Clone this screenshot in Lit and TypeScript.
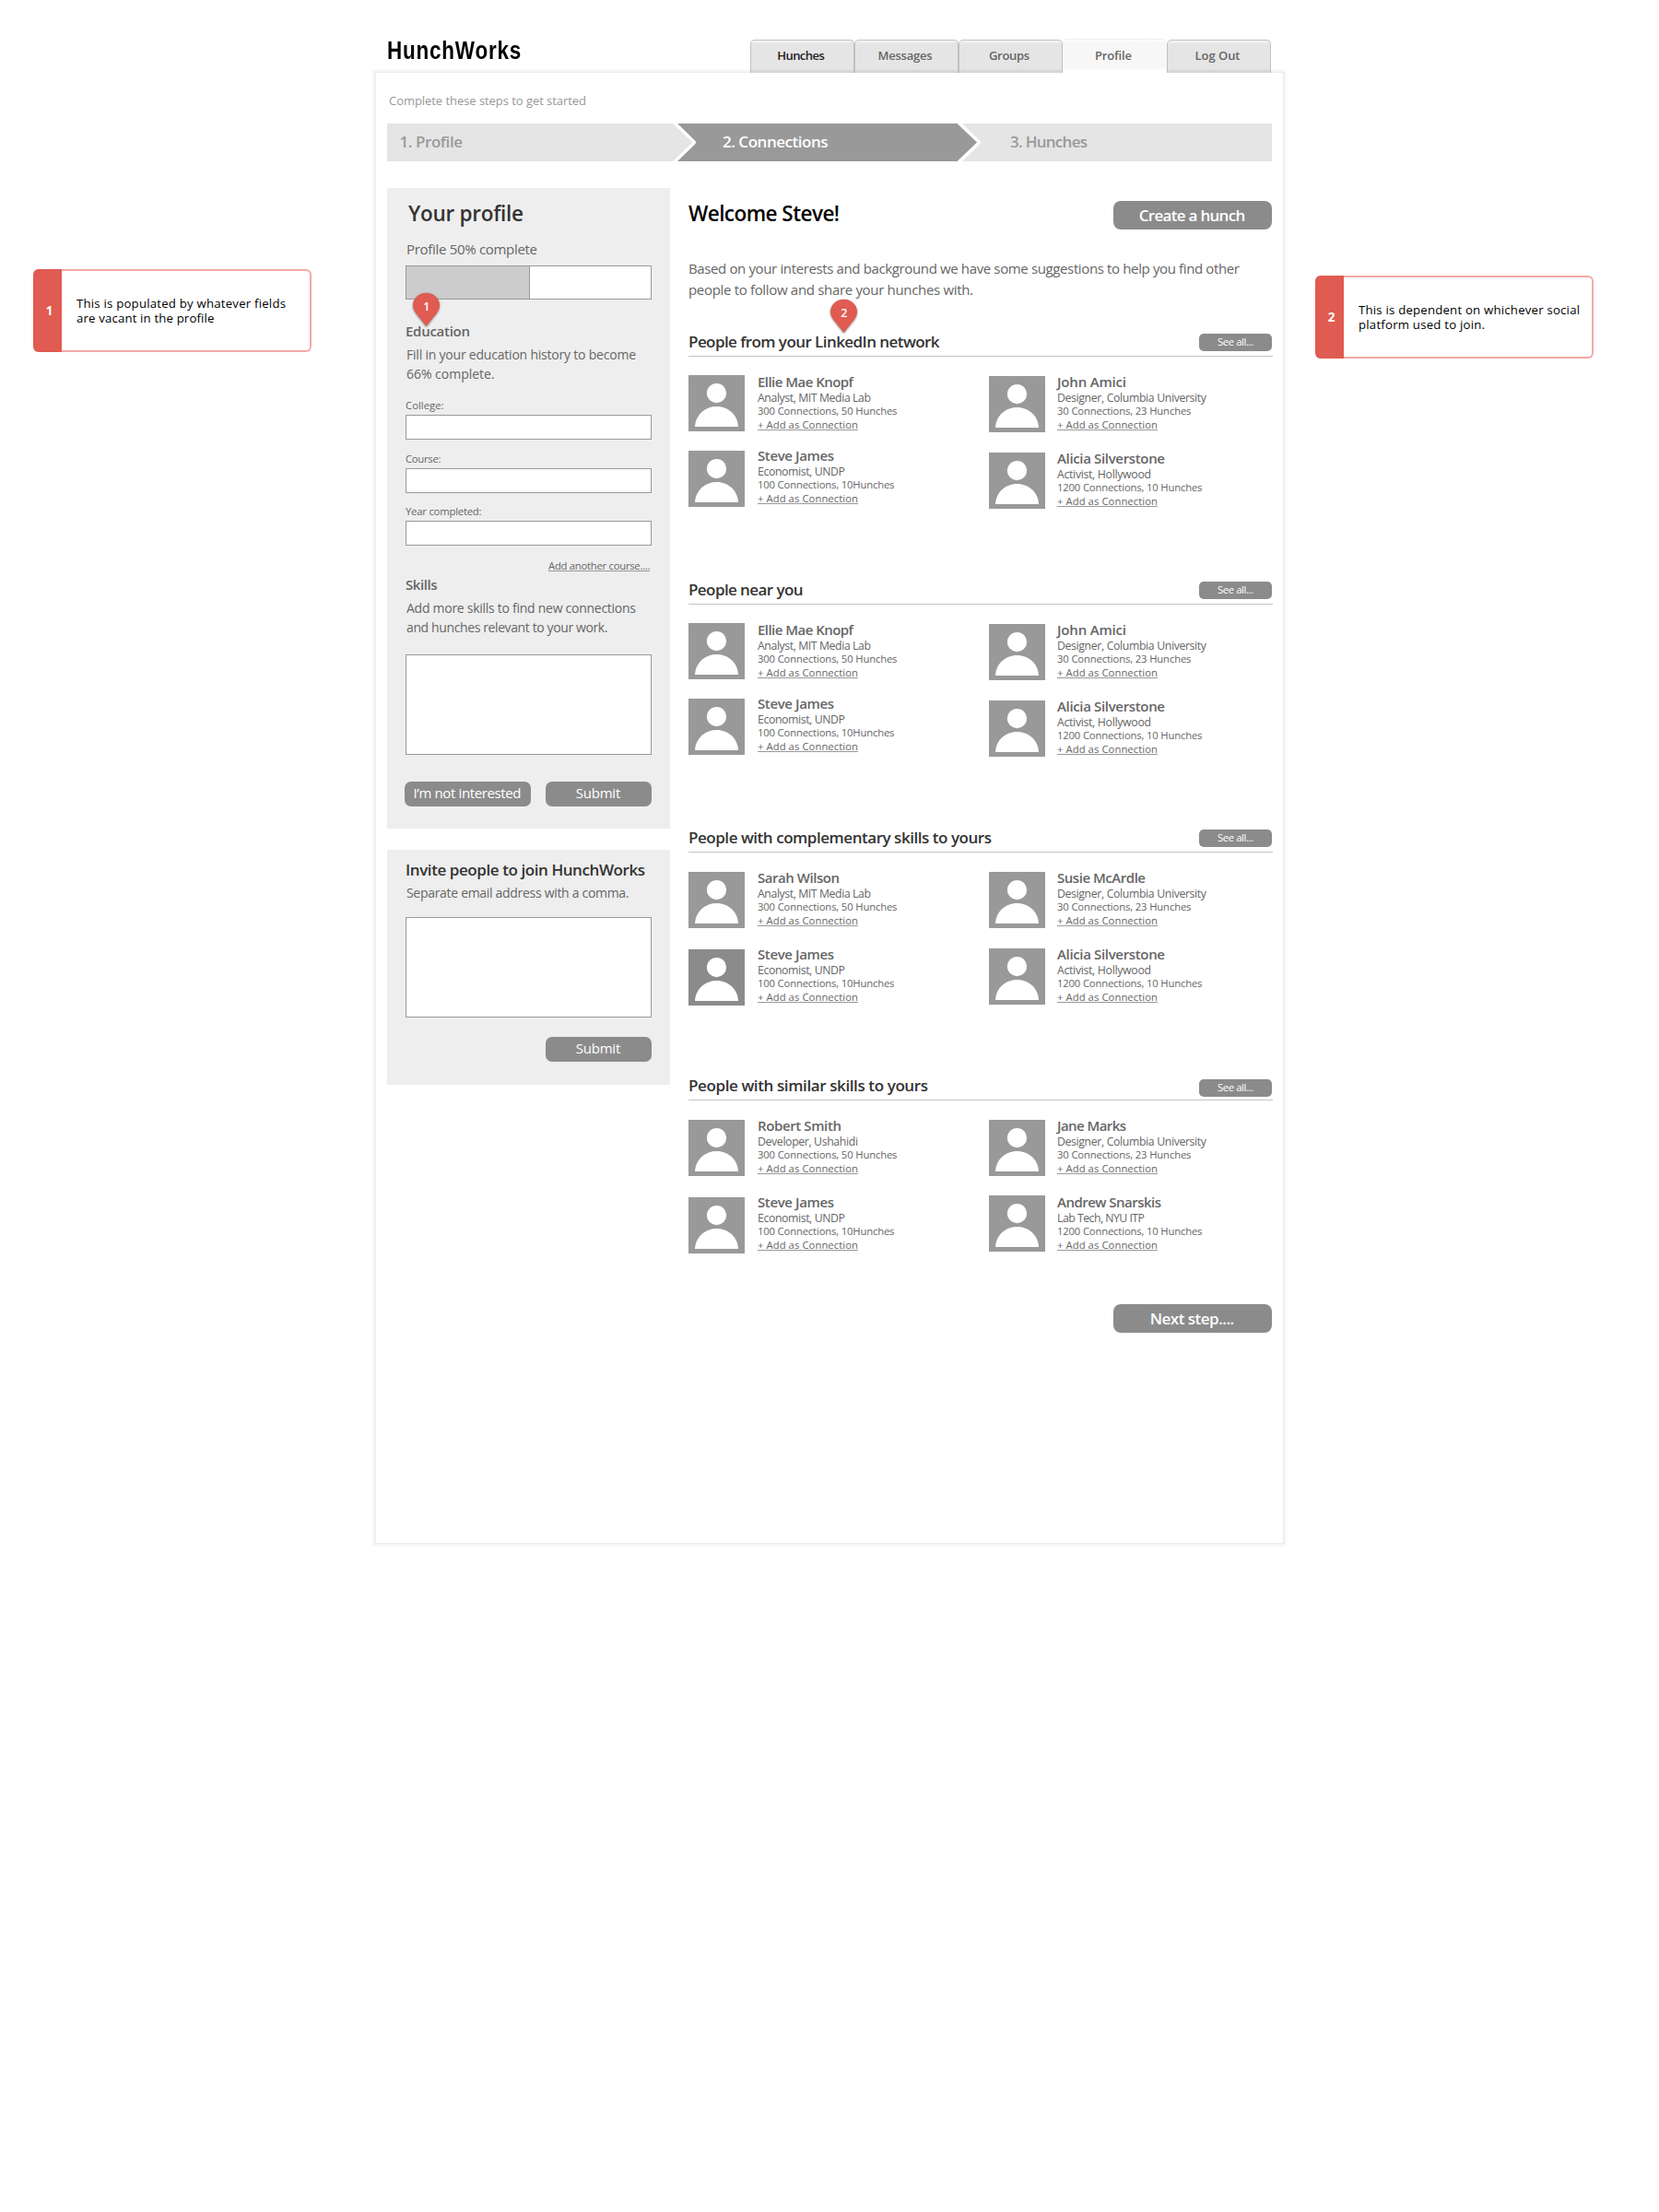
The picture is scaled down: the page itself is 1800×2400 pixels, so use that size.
import { LitElement, html, css, svg } from "lit";
import { customElement, property } from "lit/decorators.js";
import { classMap } from "lit/directives/class-map.js";

interface Person {
  name: string;
  nameWidth: number;
  role: string;
  roleWidth: number;
  stats: string;
  statsWidth: number;
  drop: number;
  tall?: boolean;
  dark?: boolean;
}

interface Group {
  title: string;
  width: number;
  left: Person[];
  right: Person[];
}

const person = (
  name: string, nameWidth: number,
  role: string, roleWidth: number,
  stats: string, statsWidth: number,
  drop: number, tall = false, dark = false,
): Person => ({ name, nameWidth, role, roleWidth, stats, statsWidth, drop, tall, dark });

const S300 = "300 Connections, 50 Hunches";
const S100 = "100 Connections, 10Hunches";
const S30 = "30 Connections, 23 Hunches";
const S1200 = "1200 Connections, 10 Hunches";
const MIT = "Analyst, MIT Media Lab";
const COL = "Designer, Columbia University";

const GROUPS: Group[] = [
  {
    title: "People from your LinkedIn network", width: 272.5,
    left: [
      person("Ellie Mae Knopf", 104, MIT, 123, S300, 151.5, 2),
      person("Steve James", 83, "Economist, UNDP", 95, S100, 148.5, 4),
    ],
    right: [
      person("John Amici", 75, COL, 162, S30, 145.5, 3, true),
      person("Alicia Silverstone", 117, "Activist, Hollywood", 102, S1200, 157.5, 3),
    ],
  },
  {
    title: "People near you", width: 124.5,
    left: [
      person("Ellie Mae Knopf", 104, MIT, 123, S300, 151.5, 2),
      person("Steve James", 83, "Economist, UNDP", 95, S100, 148.5, 4),
    ],
    right: [
      person("John Amici", 75, COL, 162, S30, 145.5, 3, true),
      person("Alicia Silverstone", 117, "Activist, Hollywood", 102, S1200, 157.5, 3),
    ],
  },
  {
    title: "People with complementary skills to yours", width: 329,
    left: [
      person("Sarah Wilson", 89, MIT, 123, S300, 151.5, 3, true),
      person("Steve James", 83, "Economist, UNDP", 95, S100, 148.5, 4, false, true),
    ],
    right: [
      person("Susie McArdle", 96, COL, 162, S30, 145.5, 3, true),
      person("Alicia Silverstone", 117, "Activist, Hollywood", 102, S1200, 157.5, 3),
    ],
  },
  {
    title: "People with similar skills to yours", width: 260,
    left: [
      person("Robert Smith", 91, "Developer, Ushahidi", 109, S300, 151.5, 3, true),
      person("Steve James", 83, "Economist, UNDP", 95, S100, 148.5, 4),
    ],
    right: [
      person("Jane Marks", 75, COL, 162, S30, 145.5, 3, true),
      person("Andrew Snarskis", 113, "Lab Tech, NYU ITP", 95, S1200, 157.5, 2),
    ],
  },
];

/**
 * One line of text set to a given measure, by tracking or,
 * when condensed, by narrowing the letters themselves.
 */
@customElement("hw-line")
export class HwLine extends LitElement {
  @property() text = "";
  @property({ type: Number }) measure = 0;
  @property({ type: Boolean }) condensed = false;

  static styles = css`
    :host { display: block; white-space: nowrap; }
    .line { display: inline-block; transform-origin: 0 50%; }
  `;

  protected firstUpdated() {
    const el = this.renderRoot.querySelector<HTMLElement>(".line");
    if (!el || !this.measure) return;
    const natural = el.getBoundingClientRect().width;
    if (this.condensed) {
      el.style.transform = `scaleX(${(this.measure / natural).toFixed(4)})`;
      return;
    }
    const gaps = Math.max(1, this.text.length - 1);
    el.style.letterSpacing = `${((this.measure - natural) / gaps).toFixed(3)}px`;
    el.style.marginRight = `${((natural - this.measure) / gaps).toFixed(3)}px`;
  }

  render() {
    return html`<span class="line">${this.text}</span>`;
  }
}

const line = (text: string, measure: number, cls = "", condensed = false) =>
  html`<hw-line class=${cls} .text=${text} .measure=${measure} .condensed=${condensed}></hw-line>`;

@customElement("hw-person")
export class HwPerson extends LitElement {
  @property({ attribute: false }) data!: Person;

  static styles = css`
    :host { display: block; }
    .row { display: flex; height: 80px; }
    .row.tall { height: 83px; }
    .avatar { width: 61px; height: 61px; flex: none; color: #999; }
    .avatar.dark { color: #8b8b8b; }
    .avatar.d2 { margin-top: 2px; }
    .avatar.d3 { margin-top: 3px; }
    .avatar.d4 { margin-top: 4px; }
    .info { margin-left: var(--info-gap, 14px); color: #666; }
    .name { font-size: 15px; line-height: 19px; font-weight: 600; }
    .role { font-size: 12.3px; line-height: 15px; height: 14px; }
    .stats, .add { font-size: 11.3px; line-height: 15px; }
    .add {
      width: 109px;
      height: 13px;
      border-bottom: 1px solid #999;
    }
  `;

  render() {
    const p = this.data;
    return html`
      <div class=${classMap({ row: true, tall: !!p.tall })}>
        <svg class=${classMap({ avatar: true, dark: !!p.dark, [`d${p.drop}`]: true })} viewBox="0 0 61 61">
          <rect width="61" height="61" fill="currentColor"></rect>
          <circle cx="30.5" cy="19.6" r="10.6" fill="#fff"></circle>
          <path d="M7 56C7.600 43.500 17.500 34 30.500 34S53.400 43.500 54 56Z" fill="#fff"></path>
        </svg>
        <div class="info">
          ${line(p.name, p.nameWidth, "name")}
          ${line(p.role, p.roleWidth, "role")}
          ${line(p.stats, p.statsWidth, "stats")}
          ${line("+ Add as Connection", 109, "add")}
        </div>
      </div>
    `;
  }
}

@customElement("app-root")
export class AppRoot extends LitElement {
  static styles = css`
    :host {
      display: block;
      position: relative;
      width: 1800px;
      height: 2400px;
      background: #fff;
      color: #666;
      font-family: "Open Sans", "Noto Sans", sans-serif;
      overflow: hidden;
    }
    * { box-sizing: border-box; }

    .site { width: 984px; margin-left: 408px; }
    .top {
      position: relative;
      z-index: 1;
      display: flex;
      justify-content: space-between;
      height: 79px;
      padding: 0 13.500px 0 12px;
    }
    .logo {
      width: 146px;
      margin-top: 38px;
      font: bold 28px/34px "Liberation Sans", sans-serif;
      letter-spacing: 1px;
      color: #000;
    }
    .tabs { display: flex; align-items: flex-end; }
    .tab {
      width: 113px;
      height: 36px;
      display: flex;
      align-items: center;
      justify-content: center;
      padding: 0 2px 3px 0;
      font-size: 13px;
      font-weight: 600;
      border: 1px solid #c0c0c0;
      border-bottom: 0;
      border-radius: 5px 5px 0 0;
      background: linear-gradient(#f6f6f6, #e5e5e5 4px, #e5e5e5 31px, #dadada 32px, #d2d2d2);
    }
    .tab.strong { color: #222; }
    .tab.current {
      height: 37px;
      border-color: #eee;
      border-left-color: transparent;
      border-right-color: transparent;
      background: linear-gradient(#fdfdfd, #f7f7f7 4px, #f7f7f7 31px, #fdfbfb 32px, #fff);
    }

    .panel {
      height: 1595px;
      padding: 21px 11px 0 12px;
      background: #fff;
      box-shadow: 0 0 0 1.500px #ededed, 0 0 0 4px #f8f8f8;
    }
    .hint { margin-left: 2px; font-size: 13px; line-height: 18px; color: #999; }

    .steps {
      display: grid;
      margin-top: 16px;
      width: 960px;
      height: 41px;
    }
    .steps > * { grid-area: 1 / 1; }
    .arrows { display: block; width: 960px; height: 41px; }
    .labels {
      display: grid;
      grid-template-columns: 350.500px 312px 1fr;
      padding-left: 13.500px;
      font-size: 17px;
      line-height: 40px;
      font-weight: 600;
      color: #999;
    }
    .labels .on { color: #fff; }

    .body { display: flex; align-items: flex-start; margin-top: 29px; }
    .side { width: 307px; margin-right: 20px; }
    .card { background: #eee; padding: 12px 20px 24px; }
    .card.invite { margin-top: 23px; padding: 12px 20px 25px; }
    .h1 { font-size: 22.5px; line-height: 32px; height: 30px; font-weight: 600; color: #333; }
    .h1.black { color: #000; }
    .card .h1 { margin-left: 3px; }
    .status { margin: 14px 0 0 1px; font-size: 15px; line-height: 20px; }
    .meter {
      margin-top: 8px;
      height: 37px;
      border: 1px solid #999;
      background: #fff;
    }
    .fill { height: 100%; background: #ccc; border-right: 1px solid #999; }
    .h3 { font-size: 15px; line-height: 20px; font-weight: 600; color: #666; }
    .h3.edu { margin-top: 24px; }
    .h3.skills { margin-top: 4px; }
    .para { margin: 5px 0 0 1px; font-size: 14px; line-height: 21px; }
    .small { font-size: 11.3px; line-height: 14px; }
    .field { margin-top: 14px; }
    .field.first { margin-top: 17px; }
    .field.last { margin-top: 13px; }
    .input {
      margin-top: 3px;
      height: 27px;
      border: 1px solid #999;
      background: #fff;
    }
    .more {
      width: 110px;
      height: 13px;
      margin: 15px 2px 1px auto;
      border-bottom: 1px solid #999;
    }
    .area { height: 109px; border: 1px solid #999; background: #fff; margin-top: 19px; }
    .btn {
      display: flex;
      align-items: center;
      justify-content: center;
      height: 27px;
      width: 115px;
      padding: 0 1px 3px 0;
      border-radius: 7px;
      background: #8b8b8b;
      color: #fff;
      font-size: 15px;
      line-height: 20px;
    }
    .btn.wide { width: 137px; }
    .btn.big {
      width: 172px;
      height: 31px;
      padding: 0 1px 0 0;
      border-radius: 8px;
      font-size: 17px;
      font-weight: 600;
    }
    .btn.tiny {
      width: 79px;
      height: 19px;
      padding: 0 0 1px;
      margin: 2px 1px 0 0;
      border-radius: 5px;
      font-size: 11.3px;
      line-height: 18px;
    }
    .actions { display: flex; justify-content: space-between; margin: 29px 0 0 -1px; }
    .h2 { font-size: 17px; line-height: 20px; font-weight: 600; color: #333; }
    .bar .h2 { line-height: 22px; }
    .invite .para { margin-top: 4px; }
    .invite .area { margin-top: 16px; }
    .invite .actions { justify-content: flex-end; margin-top: 21px; }

    .main { width: 634px; }
    .welcome {
      display: flex;
      justify-content: space-between;
      height: 45px;
      padding: 12px 1px 0 0;
    }
    .welcome .btn { margin-top: 2px; flex: none; }
    .lead { margin: 31px 0 34px; font-size: 15px; line-height: 23px; }
    .group { height: 269px; }
    .group:last-of-type { height: 248px; }
    .group:last-of-type .tiny { margin-top: 4px; }
    .bar {
      display: flex;
      align-items: flex-start;
      justify-content: space-between;
      height: 27px;
      border-bottom: 1px solid #c4c4c4;
    }
    .people { display: grid; grid-template-columns: 326px 1fr; padding-top: 18px; }
    .right { --info-gap: 13px; }
    .next { display: flex; justify-content: flex-end; padding-right: 1px; }

    .note {
      position: absolute;
      display: flex;
      width: 302px;
      height: 90px;
      border: 2px solid #f2a9a5;
      border-left: 0;
      border-radius: 6px;
      background: #fff;
      font-size: 13.2px;
      line-height: 15.5px;
      color: #000;
    }
    .note.one { left: 36px; top: 292px; }
    .note.two { left: 1427px; top: 299px; }
    .tag {
      width: 31px;
      margin: -2px 0;
      display: flex;
      align-items: center;
      justify-content: center;
      padding: 2px 0 0 4px;
      border-radius: 6px 0 0 6px;
      background: #e05b52;
      color: #fff;
      font-size: 13.5px;
      font-weight: 700;
    }
    .words { padding: 28px 0 0 16px; }
    .pin { position: absolute; width: 33px; height: 41px; overflow: visible; }
    .pin.one { left: 446px; top: 316px; }
    .pin.two { left: 899px; top: 323px; }
    .num { font: 600 12.5px "Open Sans", sans-serif; fill: #fff; text-anchor: middle; }
    .drop { filter: drop-shadow(0 1px 1px rgba(0, 0, 0, 0.45)); }
  `;

  private pin(n: number, cls: string) {
    return html`<svg class="pin ${cls}" viewBox="0 0 33 41">
      ${svg`<path class="drop" fill="#e05b52" d="M16.500 1.700C24.500 1.700 31 7.600 31 15.200C31 18.500 29.600 21.200 27.800 23.800L16.500 38L5.200 23.800C3.400 21.200 2 18.500 2 15.200C2 7.600 8.500 1.700 16.500 1.700Z"></path>
      <text class="num" x="16.800" y="21">${n}</text>`}
    </svg>`;
  }

  private field(label: string, width: number, cls = "") {
    return html`<div class="field ${cls}">
      ${line(label, width, "small")}
      <div class="input"></div>
    </div>`;
  }

  private tab(label: string, width: number, cls = "") {
    return html`<div class="tab ${cls}">${line(label, width)}</div>`;
  }

  private group(g: Group) {
    const column = (people: Person[], cls: string) =>
      html`<div class=${cls}>${people.map((p) => html`<hw-person .data=${p}></hw-person>`)}</div>`;
    return html`<section class="group">
      <div class="bar">
        ${line(g.title, g.width, "h2")}
        <div class="btn tiny">${line("See all...", 39)}</div>
      </div>
      <div class="people">${column(g.left, "left")}${column(g.right, "right")}</div>
    </section>`;
  }

  render() {
    return html`
      <div class="site">
        <header class="top">
          ${line("HunchWorks", 146, "logo", true)}
          <nav class="tabs">
            ${this.tab("Hunches", 51.5, "strong")}
            ${this.tab("Messages", 59)}
            ${this.tab("Groups", 44)}
            ${this.tab("Profile", 40, "current")}
            ${this.tab("Log Out", 49)}
          </nav>
        </header>
        <div class="panel">
          ${line("Complete these steps to get started", 214, "hint")}
          <div class="steps">
            <svg class="arrows" viewBox="0 0 960 41">
              <path fill="#e5e5e5" d="M0 0H310L331.500 20.500L310 41H0Z"></path>
              <path fill="#999" d="M315 0H618.500L640 20.500L618.500 41H315L334 22.500Q336 20.500 334 18.500Z"></path>
              <path fill="#e5e5e5" d="M624 0H960V41H624L643 22.500Q645 20.500 643 18.500Z"></path>
            </svg>
            <div class="labels">
              ${line("1. Profile", 68.5)}
              ${line("2. Connections", 114.5, "on")}
              ${line("3. Hunches", 84)}
            </div>
          </div>
          <div class="body">
            <aside class="side">
              <div class="card">
                ${line("Your profile", 125, "h1")}
                ${line("Profile 50% complete", 142, "status")}
                <div class="meter"><div class="fill" style="width:50.600%"></div></div>
                ${line("Education", 70, "h3 edu")}
                <div class="para">
                  ${line("Fill in your education history to become", 249)}
                  ${line("66% complete.", 95.5)}
                </div>
                ${this.field("College:", 41.5, "first")}
                ${this.field("Course:", 38.5)}
                ${this.field("Year completed:", 82.5, "last")}
                ${line("Add another course....", 110.5, "small more")}
                ${line("Skills", 34.5, "h3 skills")}
                <div class="para">
                  ${line("Add more skills to find new connections", 249)}
                  ${line("and hunches relevant to your work.", 218.5)}
                </div>
                <div class="area"></div>
                <div class="actions">
                  <div class="btn wide">${line("I’m not interested", 117)}</div>
                  <div class="btn">${line("Submit", 48.5)}</div>
                </div>
              </div>
              <div class="card invite">
                ${line("Invite people to join HunchWorks", 260, "h2")}
                <div class="para">${line("Separate email address with a comma.", 241.5)}</div>
                <div class="area"></div>
                <div class="actions"><div class="btn">${line("Submit", 48.5)}</div></div>
              </div>
            </aside>
            <main class="main">
              <div class="welcome">
                ${line("Welcome Steve!", 164, "h1 black")}
                <div class="btn big">${line("Create a hunch", 115.5)}</div>
              </div>
              <div class="lead">
                ${line("Based on your interests and background we have some suggestions to help you find other", 598)}
                ${line("people to follow and share your hunches with.", 309)}
              </div>
              ${GROUPS.map((g) => this.group(g))}
              <div class="next"><div class="btn big">${line("Next step....", 91.5)}</div></div>
            </main>
          </div>
        </div>
      </div>

      <div class="note one">
        <div class="tag">1</div>
        <div class="words">
          ${line("This is populated by whatever fields", 227)}
          ${line("are vacant in the profile", 149.5)}
        </div>
      </div>
      <div class="note two">
        <div class="tag">2</div>
        <div class="words">
          ${line("This is dependent on whichever social", 240)}
          ${line("platform used to join.", 137)}
        </div>
      </div>
      ${this.pin(1, "one")} ${this.pin(2, "two")}
    `;
  }
}
